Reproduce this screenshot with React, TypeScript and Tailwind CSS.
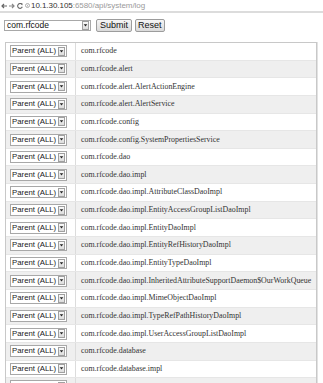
const loggers = [
  "com.rfcode",
  "com.rfcode.alert",
  "com.rfcode.alert.AlertActionEngine",
  "com.rfcode.alert.AlertService",
  "com.rfcode.config",
  "com.rfcode.config.SystemPropertiesService",
  "com.rfcode.dao",
  "com.rfcode.dao.impl",
  "com.rfcode.dao.impl.AttributeClassDaoImpl",
  "com.rfcode.dao.impl.EntityAccessGroupListDaoImpl",
  "com.rfcode.dao.impl.EntityDaoImpl",
  "com.rfcode.dao.impl.EntityRefHistoryDaoImpl",
  "com.rfcode.dao.impl.EntityTypeDaoImpl",
  "com.rfcode.dao.impl.InheritedAttributeSupportDaemon$OurWorkQueue",
  "com.rfcode.dao.impl.MimeObjectDaoImpl",
  "com.rfcode.dao.impl.TypeRefPathHistoryDaoImpl",
  "com.rfcode.dao.impl.UserAccessGroupListDaoImpl",
  "com.rfcode.database",
  "com.rfcode.database.impl",
  "com.rfcode.database.impl.h2",
];

const Arrow = () => (
  <div className="flex shrink-0 items-center justify-center w-[7px] h-[9px] border border-[#a0a0a0] bg-gradient-to-b from-[#fafafa] to-[#dcdcdc]">
    <svg width="5" height="3" viewBox="0 0 5 3">
      <path d="M0.7 0.2 L4.3 0.2 L2.5 2.6 Z" fill="#222" />
    </svg>
  </div>
);

export default function App() {
  return (
    <div className="w-[323px] h-[383px] overflow-hidden bg-white font-['Liberation_Sans',Arial,sans-serif]">
      {/* browser address bar */}
      <div className="flex items-center h-[13px] pl-[1px] border-b-2 border-[#dcdcdc] bg-white">
        <svg width="6" height="6" viewBox="0 0 6 6" className="mr-[2px]">
          <path d="M6 3 H1 M3 1 L1 3 L3 5" stroke="#666" strokeWidth="1.2" fill="none" />
        </svg>
        <svg width="6" height="6" viewBox="0 0 6 6" className="mr-[2px]">
          <path d="M0 3 H5 M3 1 L5 3 L3 5" stroke="#888" strokeWidth="1.2" fill="none" />
        </svg>
        <svg width="6" height="6" viewBox="0 0 6 6" className="mr-[2px]">
          <path d="M5 1.5 A2.4 2.4 0 1 0 5.3 3.8" stroke="#666" strokeWidth="1.1" fill="none" />
          <path d="M3.8 0.3 L5.6 0.6 L5.2 2.4 Z" fill="#666" />
        </svg>
        <svg width="5" height="5" viewBox="0 0 5 5" className="mr-[1px]">
          <circle cx="2.5" cy="2.5" r="2" stroke="#999" strokeWidth="0.8" fill="none" />
          <path d="M2.5 1.8 V3.5" stroke="#999" strokeWidth="0.7" />
        </svg>
        <span className="text-[8px] leading-none tracking-[-0.05px] whitespace-nowrap">
          <span className="text-[#333]">10.1.30.105</span>
          <span className="text-[#9a9a9a]">:6580/api/system/log</span>
        </span>
      </div>

      {/* form */}
      <div className="flex items-center gap-[3px] mt-[6px] ml-[4px]">
        <div className="flex items-center justify-between w-[87px] h-[11px] border border-[#a8a8a8] bg-white pl-[2px] pr-[1px]">
          <span className="text-[8.5px] leading-none text-[#111] whitespace-nowrap">com.rfcode</span>
          <Arrow />
        </div>
        <button className="h-[13px] ml-[2px] px-[3px] border border-[#9c9c9c] rounded-[2px] bg-gradient-to-b from-[#f6f6f6] to-[#dadada] text-[9px] leading-none text-[#111]">
          Submit
        </button>
        <button className="h-[13px] px-[2px] border border-[#9c9c9c] rounded-[2px] bg-gradient-to-b from-[#f6f6f6] to-[#dadada] text-[9px] leading-none text-[#111]">
          Reset
        </button>
      </div>

      {/* logger table */}
      <div className="mt-[10px] ml-[5px] w-[312px] border border-[#c8c8c8] shadow-[1px_0_0_#e2e2e2]">
        {loggers.map((name, i) => (
          <div
            key={name}
            className={`flex h-[17.65px] border-b border-[#e6e6e6] ${i % 2 === 1 ? "bg-[#efefef]" : "bg-white"}`}
          >
            <div className="flex shrink-0 items-center w-[70px] pl-[4px] border-r border-[#dcdcdc]">
              <div className="flex items-center justify-between w-[57px] h-[12px] border border-[#a8a8a8] bg-white pl-[1px] pr-[1px]">
                <span className="text-[7.8px] leading-none text-[#1a1a1a] whitespace-nowrap">Parent (ALL)</span>
                <Arrow />
              </div>
            </div>
            <div className="flex items-center pl-[5px] text-[7.9px] leading-none text-[#333] whitespace-nowrap font-['Liberation_Serif','Times_New_Roman',serif]">
              {name}
            </div>
          </div>
        ))}
      </div>
    </div>
  );
}
